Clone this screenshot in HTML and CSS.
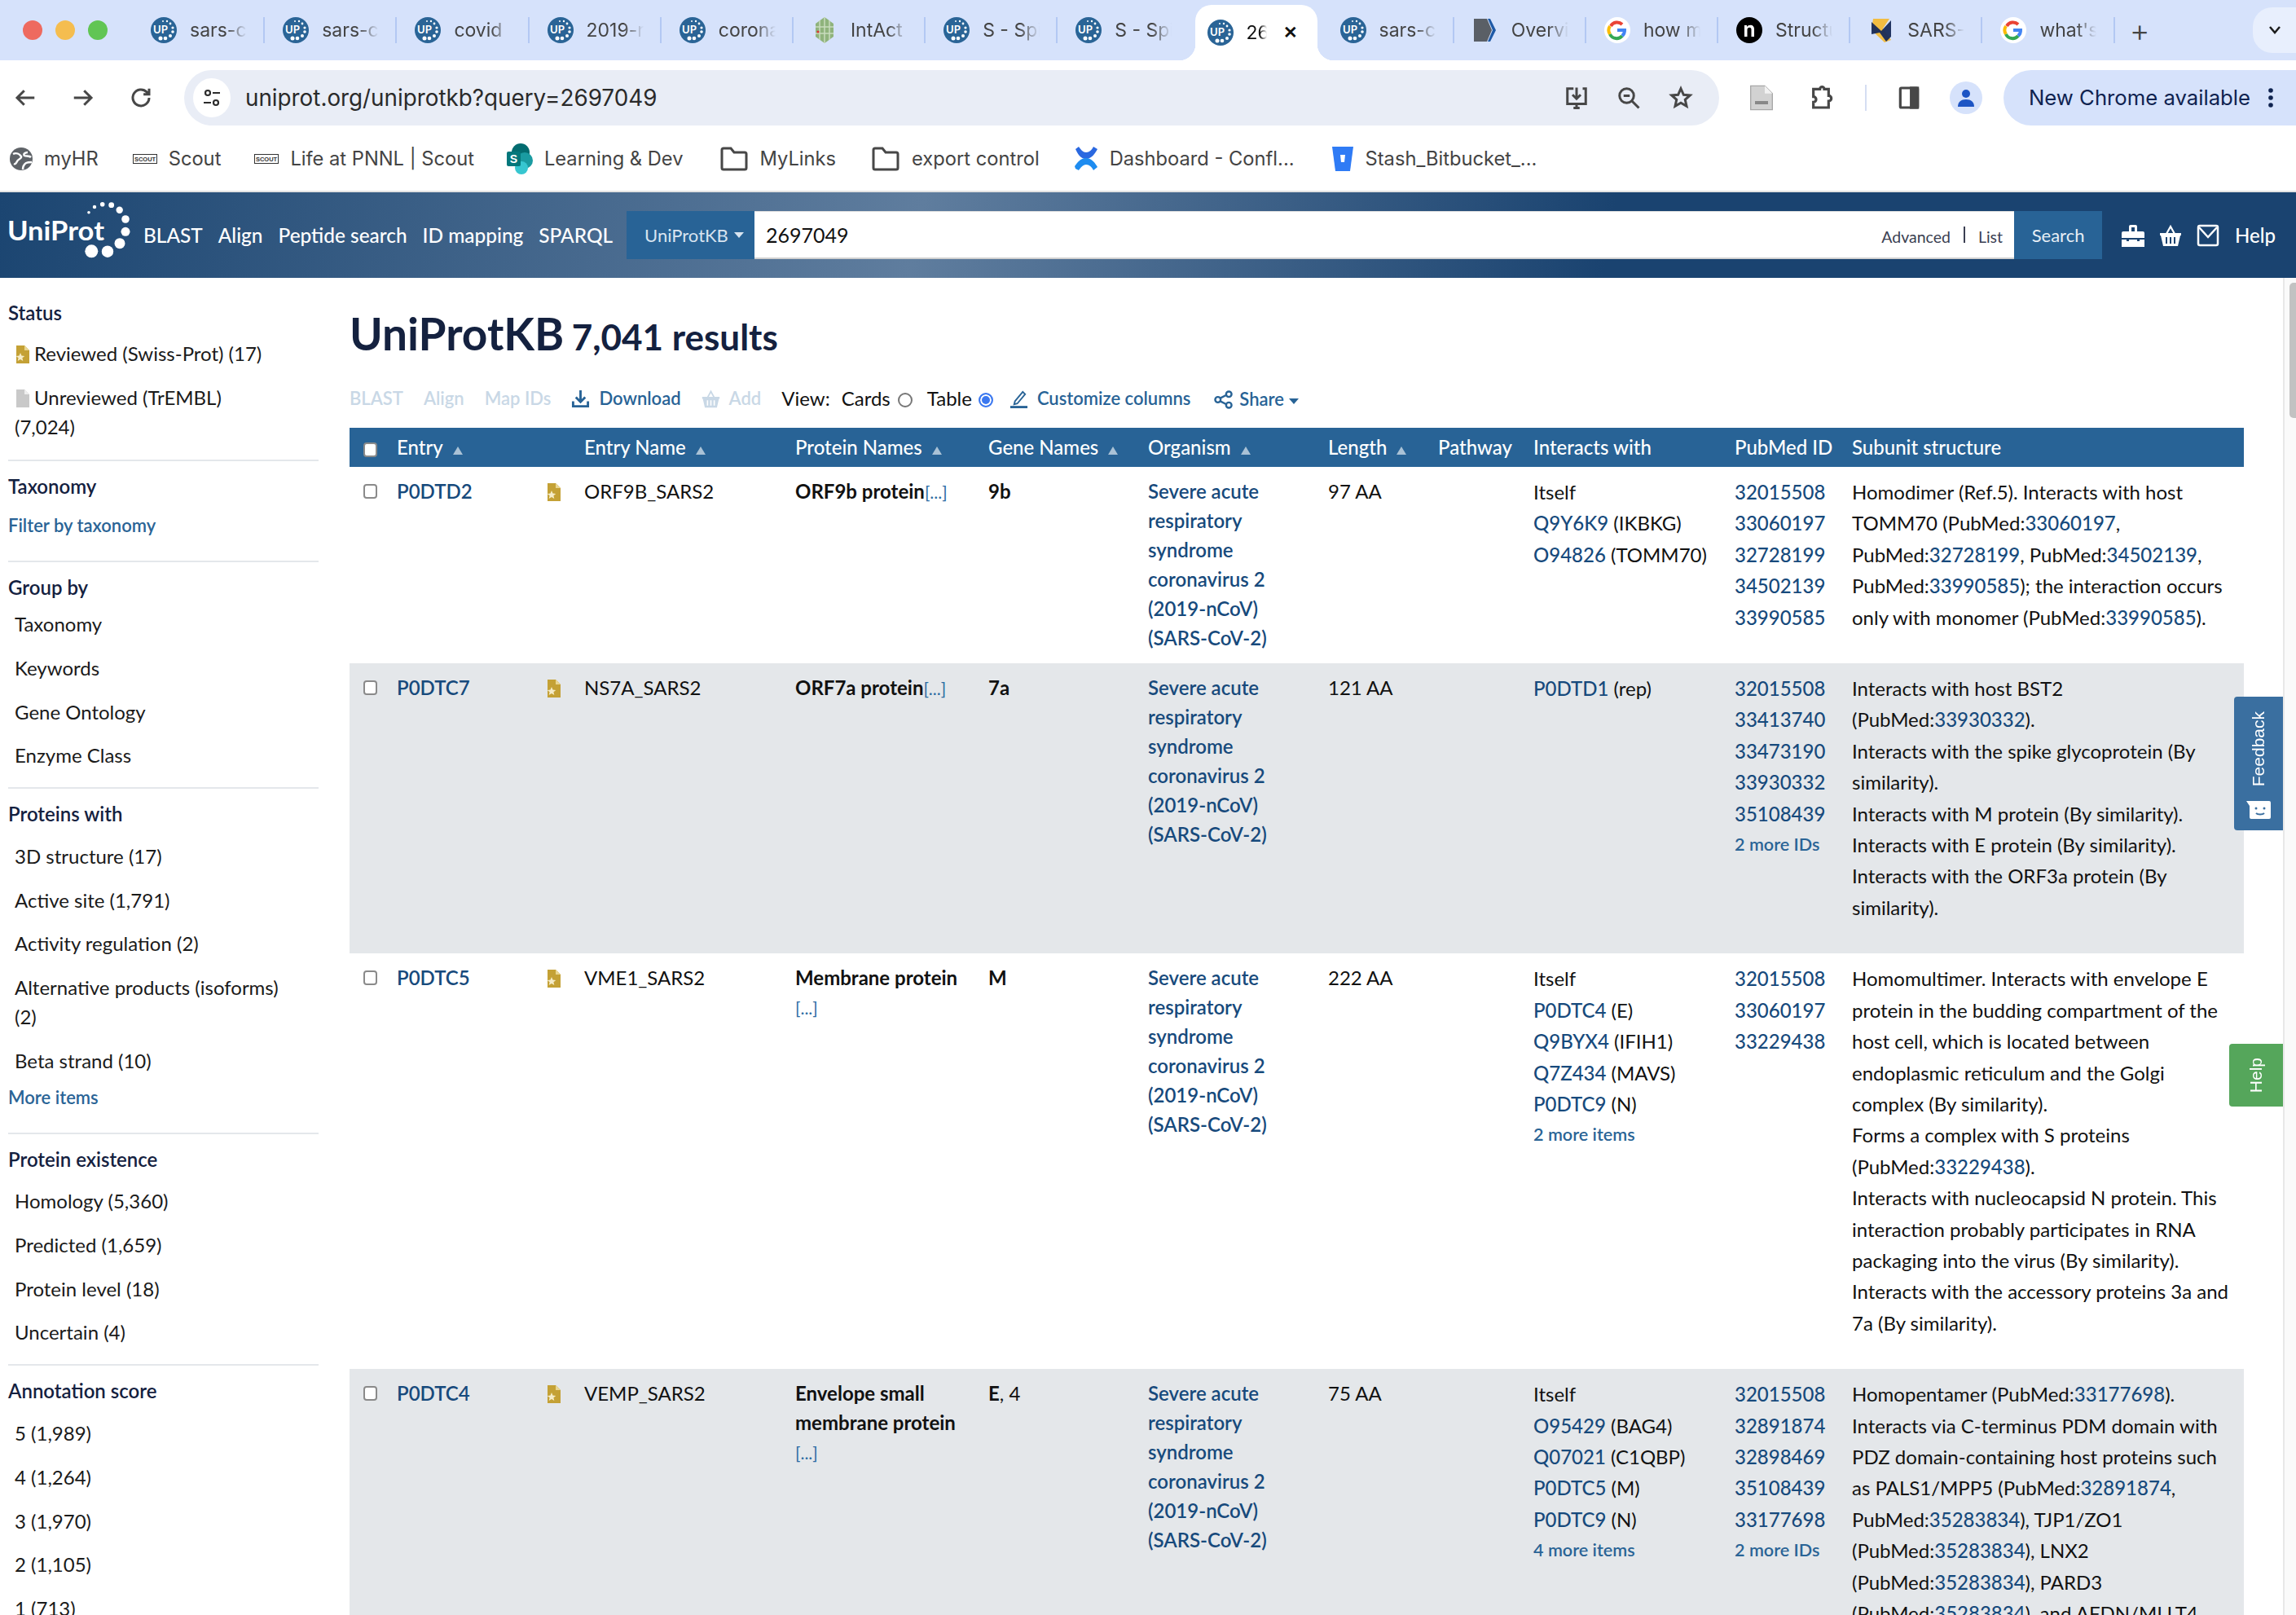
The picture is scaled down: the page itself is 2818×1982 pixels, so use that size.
FILE: index.html
```html
<!DOCTYPE html>
<html lang="en">
<head>
    <meta charset="UTF-8">
    <title>2697049 | UniProtKB</title>
    <link rel="stylesheet" href="styles.css">
</head>
<body>
    <svg class="defs" aria-hidden="true">
        <symbol id="i-up" viewBox="0 0 32 32">
            <circle cx="16" cy="16" r="16" fill="#2a6496"/>
            <text x="3" y="20" font-family="Lato, sans-serif" font-weight="700" font-size="13" fill="#fff">UP</text>
            <circle cx="15" cy="5" r="1" fill="#fff"/><circle cx="20" cy="5" r="1.2" fill="#fff"/><circle cx="24" cy="8" r="1.4" fill="#fff"/>
            <circle cx="27" cy="13" r="1.6" fill="#fff"/><circle cx="27" cy="18" r="1.8" fill="#fff"/><circle cx="24" cy="23" r="2" fill="#fff"/>
            <circle cx="18" cy="26" r="2.3" fill="#fff"/><circle cx="12" cy="26" r="2.5" fill="#fff"/>
        </symbol>
        <symbol id="i-g" viewBox="0 0 32 32">
            <circle cx="16" cy="16" r="16" fill="#fff"/>
            <path d="M8 11a9 9 0 0 1 14-2" fill="none" stroke="#ea4335" stroke-width="4"/>
            <path d="M7 21a9 9 0 0 1 0-10" fill="none" stroke="#fbbc05" stroke-width="4"/>
            <path d="M22 23a9 9 0 0 1-15-2" fill="none" stroke="#34a853" stroke-width="4"/>
            <path d="M16 16h9a9 9 0 0 1-3 7" fill="none" stroke="#4285f4" stroke-width="4"/>
        </symbol>
        <symbol id="i-folder" viewBox="0 0 34 34">
            <path d="M2 6a2 2 0 0 1 2-2h9l4 5h13a2 2 0 0 1 2 2v17a2 2 0 0 1-2 2H4a2 2 0 0 1-2-2z" fill="none" stroke="#474747" stroke-width="3"/>
        </symbol>
        <symbol id="i-scout" viewBox="0 0 30 12">
            <rect x=".5" y=".5" width="29" height="11" fill="#fff" stroke="#333"/>
            <text x="15" y="9" text-anchor="middle" font-family="Liberation Sans, sans-serif" font-weight="700" font-size="7.5" fill="#333">SCOUT</text>
        </symbol>
        <symbol id="i-gold" viewBox="0 0 16 22">
            <path d="M0 0h10l6 6v16H0z" fill="#c4a135"/>
            <path d="M10 0l6 6h-6z" fill="#e9d691"/>
            <path d="M5 9l1.500 3.600 3.800.3-2.900 2.400.9 3.700L5 17l-3.300 2 .9-3.700L-.3 12.900l3.800-.3z" fill="#f5ecc8"/>
        </symbol>
        <symbol id="i-grey" viewBox="0 0 16 22">
            <path d="M0 0h10l6 6v16H0z" fill="#c9c9c9"/>
            <path d="M10 0l6 6h-6z" fill="#eee"/>
        </symbol>
        <symbol id="i-basket" viewBox="0 0 28 28">
            <path d="M9 12l5-9 5 9" fill="none" stroke="currentColor" stroke-width="2.200"/>
            <path d="M1 11h26v3h-1l-3 13H5L2 14H1z" fill="currentColor"/>
            <path d="M9 16v8M14 16v8M19 16v8" stroke="#fff" stroke-width="2"/>
        </symbol>
        <symbol id="i-download" viewBox="0 0 24 24">
            <path d="M12 1v15M6 10l6 6 6-6" fill="none" stroke="currentColor" stroke-width="3"/>
            <path d="M1 15h3v5h16v-5h3v8H1z" fill="currentColor"/>
        </symbol>
    </svg>

    <div class="tabstrip">
        <div class="lights"><i class="light red"></i><i class="light yellow"></i><i class="light green"></i></div>
        <div class="tab"><svg class="fav"><use href="#i-up"/></svg><span class="tab-title">sars-cov</span></div>
        <div class="tab"><svg class="fav"><use href="#i-up"/></svg><span class="tab-title">sars-cov</span></div>
        <div class="tab"><svg class="fav"><use href="#i-up"/></svg><span class="tab-title">covid</span></div>
        <div class="tab"><svg class="fav"><use href="#i-up"/></svg><span class="tab-title">2019-nCoV</span></div>
        <div class="tab"><svg class="fav"><use href="#i-up"/></svg><span class="tab-title">coronavirus</span></div>
        <div class="tab">
            <svg class="fav" viewBox="0 0 32 32"><path d="M16 0l11 8v16l-11 8-11-8V8z" fill="#8fb37c"/><path d="M5 12h22M5 20h22M16 0v32M10 4v24M22 4v24" stroke="#c9dcbd" stroke-width="1.500"/><circle cx="8" cy="18" r="1.500" fill="#d33"/></svg>
            <span class="tab-title">IntAct</span>
        </div>
        <div class="tab"><svg class="fav"><use href="#i-up"/></svg><span class="tab-title">S - Spike</span></div>
        <div class="tab tab-last-up"><svg class="fav"><use href="#i-up"/></svg><span class="tab-title">S - Spike</span></div>
        <div class="tab tab-active"><svg class="fav"><use href="#i-up"/></svg><span class="tab-title short">2697049</span><span class="tab-close">✕</span></div>
        <div class="tab"><svg class="fav"><use href="#i-up"/></svg><span class="tab-title">sars-cov</span></div>
        <div class="tab">
            <svg class="fav" viewBox="0 0 32 32"><path d="M2 2h16l6 14-6 14H2z" fill="#5a5f66"/><path d="M22 2l7 14-7 14h-3l6-14-6-14z" fill="#1f5aa6"/></svg>
            <span class="tab-title">Overview</span>
        </div>
        <div class="tab"><svg class="fav"><use href="#i-g"/></svg><span class="tab-title">how many</span></div>
        <div class="tab">
            <svg class="fav" viewBox="0 0 32 32"><circle cx="16" cy="16" r="16" fill="#000"/><path d="M10 24V10h3v2c1-1.500 2.500-2.300 4.500-2.300 3 0 4.500 2 4.500 5V24h-3.500v-8.500c0-1.800-.8-2.800-2.300-2.800s-2.700 1-2.700 2.800V24z" fill="#fff"/></svg>
            <span class="tab-title">Structure</span>
        </div>
        <div class="tab">
            <svg class="fav" viewBox="0 0 32 32"><path d="M6 2h20L18 14l10 14-8 3L4 16z" fill="#f2bd42"/><path d="M4 6l12 11 12-13v20l-6 6-8-11-10 2z" fill="#172a58" opacity=".95"/></svg>
            <span class="tab-title">SARS-CoV</span>
        </div>
        <div class="tab"><svg class="fav"><use href="#i-g"/></svg><span class="tab-title">what's the</span></div>
        <span class="tab-new">+</span>
        <span class="tab-list"><svg width="16" height="12" viewBox="0 0 16 12"><path d="M2 2l6 7 6-7" fill="none" stroke="#1c1c1c" stroke-width="2.500"/></svg></span>
    </div>

    <div class="toolbar">
        <svg class="tool nav-back" viewBox="0 0 24 24"><path d="M21 12H4M11 5l-7 7 7 7" /></svg>
        <svg class="tool nav-fwd" viewBox="0 0 24 24"><path d="M3 12h17M13 5l7 7-7 7" /></svg>
        <svg class="tool nav-reload" viewBox="0 0 24 24"><path d="M20 12a8 8 0 1 1-2.300-5.700L20 8.500M20 3v5.500h-5.500" /></svg>
        <div class="omnibox">
            <span class="site-info"><svg width="24" height="24" viewBox="0 0 24 24" fill="none" stroke="#2c2c2c" stroke-width="2.200"><circle cx="7" cy="6" r="3"/><path d="M13 6h9M2 18h9"/><circle cx="17" cy="18" r="3"/></svg></span>
            <span class="url">uniprot.org/uniprotkb?query=2697049</span>
            <svg class="tool omni-icon omni-first" viewBox="0 0 24 24"><path d="M9 3H3v15h18V3h-3M12 2v10M8 9l4 4 4-4M9 22h6M12 18v4" /></svg>
            <svg class="tool omni-icon" viewBox="0 0 24 24"><circle cx="10" cy="10" r="7"/><path d="M15 15l7 7M7 10h6"/></svg>
            <svg class="tool omni-icon" viewBox="0 0 24 24"><path d="M12 3l2.700 6 6.300.6-4.800 4.200 1.400 6.400L12 17l-5.600 3.200 1.400-6.400L3 9.600 9.300 9z" /></svg>
        </div>
        <svg class="ext-icon" viewBox="0 0 24 24"><path d="M2 1h13l7 7v15H2z" fill="#d2d2d2" stroke="#a8a8a8"/><path d="M15 1v7h7z" fill="#f2f2f2"/><rect x="6" y="15" width="12" height="3" fill="#888"/></svg>
        <svg class="tool ext-icon puzzle" viewBox="0 0 24 24"><path d="M9 4h2a2 2 0 0 1 4 0h4v6a2.500 2.500 0 0 1 0 5v6H5v-5a2.500 2.500 0 0 0 0-5V4z" /></svg>
        <span class="tool-sep"></span>
        <svg class="tool ext-icon" viewBox="0 0 24 24"><rect x="4" y="3" width="16" height="18" rx="1"/><rect x="14" y="3" width="6" height="18" fill="#474747"/></svg>
        <span class="avatar"><svg width="26" height="26" viewBox="0 0 26 26"><circle cx="13" cy="8" r="5" fill="#1d55c4"/><path d="M3 24c0-6 4-9 10-9s10 3 10 9z" fill="#1d55c4"/></svg></span>
        <div class="update-pill">
            <span>New Chrome available</span>
            <svg width="6" height="24" viewBox="0 0 6 24"><circle cx="3" cy="3" r="2.800" fill="#0f2350"/><circle cx="3" cy="12" r="2.800" fill="#0f2350"/><circle cx="3" cy="21" r="2.800" fill="#0f2350"/></svg>
        </div>
    </div>

    <div class="bookmarks">
        <span class="bm"><svg class="bm-globe" viewBox="0 0 28 28"><circle cx="14" cy="14" r="14" fill="#5f6368"/><path d="M4 8c4-2 8 0 10 3 1 3-4 3-5 6-1 2-2 4-4 3M22 6c-3 0-6 2-4 4 2 1 6 0 8 2M16 27c0-3 1-6 4-8 2-1 5-1 7-1" fill="none" stroke="#fff" stroke-width="2.500"/></svg>myHR</span>
        <span class="bm bm-scout"><svg class="bm-s"><use href="#i-scout"/></svg>Scout</span>
        <span class="bm bm-scout2"><svg class="bm-s"><use href="#i-scout"/></svg>Life at PNNL | Scout</span>
        <span class="bm bm-sp"><svg class="bm-share" viewBox="0 0 34 38"><circle cx="17" cy="11" r="11" fill="#036c70"/><circle cx="22" cy="21" r="10" fill="#1a9ba1"/><circle cx="18" cy="30" r="8" fill="#37c6d0"/><rect x="0" y="10" width="17" height="18" rx="2" fill="#04777b"/><text x="8.500" y="24" text-anchor="middle" font-family="Liberation Sans, sans-serif" font-weight="700" font-size="14" fill="#fff">S</text></svg>Learning &amp; Dev</span>
        <span class="bm bm-f1"><svg class="bm-folder"><use href="#i-folder"/></svg>MyLinks</span>
        <span class="bm bm-f2"><svg class="bm-folder"><use href="#i-folder"/></svg>export control</span>
        <span class="bm bm-conf"><svg class="bm-c" viewBox="0 0 30 32"><path d="M2 4l4-3c3 4 5 7 9 7s7-3 9-7l5 3c-3 5-7 12-14 12S5 10 2 4z" fill="#2a68e0"/><path d="M2 28l-1-3c3-4 7-10 14-10s11 6 14 11l-5 4c-2-4-5-7-9-7s-7 4-9 7z" fill="#1e8cf0"/></svg>Dashboard - Confl...</span>
        <span class="bm bm-bit"><svg class="bm-b" viewBox="0 0 26 32"><path d="M0 1h26l-4 30H4z" fill="#2f7bf5"/><path d="M10 11h6l-1 9h-4z" fill="#fff"/></svg>Stash_Bitbucket_...</span>
    </div>

    <header class="site-head">
        <svg class="logo" viewBox="0 0 150 90">
            <text x="-1" y="54" font-family="Lato, sans-serif" font-weight="700" font-size="32" textLength="119" lengthAdjust="spacingAndGlyphs" fill="#fff">UniProt</text>
            <circle cx="99" cy="19.700" r="1.800" fill="#fff"/><circle cx="106" cy="13" r="2.200" fill="#fff"/><circle cx="115.700" cy="9.700" r="2.800" fill="#fff"/>
            <circle cx="126.700" cy="10.700" r="3.400" fill="#fff"/><circle cx="136.700" cy="16.700" r="4.200" fill="#fff"/><circle cx="144" cy="28" r="4.800" fill="#fff"/>
            <circle cx="144" cy="43.300" r="5.500" fill="#fff"/><circle cx="137" cy="57.700" r="6.500" fill="#fff"/><circle cx="122" cy="67.700" r="7.200" fill="#fff"/>
            <circle cx="102.300" cy="67.300" r="8" fill="#fff"/>
        </svg>
        <nav class="site-nav">
            <a>BLAST</a><a>Align</a><a>Peptide search</a><a>ID mapping</a><a>SPARQL</a>
        </nav>
        <div class="search">
            <span class="search-ns">UniProtKB<i class="caret"></i></span>
            <div class="search-box">
                <span class="search-term">2697049</span>
                <span class="search-opt">Advanced</span><span class="search-bar"></span><span class="search-opt">List</span>
            </div>
            <span class="search-btn">Search</span>
        </div>
        <div class="head-icons">
            <svg viewBox="0 0 28 28"><path d="M9 9V3a2 2 0 0 1 2-2h6a2 2 0 0 1 2 2v6h7a2 2 0 0 1 2 2v6H0v-6a2 2 0 0 1 2-2zM12 4v5h4V4z" fill="#fff" fill-rule="evenodd"/><path d="M0 19h6v2h3v-2h10v2h3v-2h6v9H0z" fill="#fff"/></svg>
            <svg viewBox="0 0 28 28" class="basket"><path d="M9 12l5-9 5 9" fill="none" stroke="#fff" stroke-width="2.200"/><path d="M1 11h26v3h-1l-3 13H5L2 14H1z" fill="#fff"/><path d="M9 16v8M14 16v8M19 16v8" stroke="#1a4370" stroke-width="2"/></svg>
            <svg viewBox="0 0 28 28"><rect x="2" y="2" width="24" height="24" rx="2" fill="none" stroke="#fff" stroke-width="2.500"/><path d="M3 4l11 12L25 4" fill="none" stroke="#fff" stroke-width="2.500"/></svg>
            <span class="head-help">Help</span>
        </div>
    </header>

    <div class="page">
        <aside class="facets">
            <section class="facet">
                <h4>Status</h4>
                <ul>
                    <li><svg class="doc"><use href="#i-gold"/></svg>Reviewed (Swiss-Prot) (17)</li>
                    <li><svg class="doc"><use href="#i-grey"/></svg>Unreviewed (TrEMBL) (7,024)</li>
                </ul>
            </section>
            <section class="facet facet-link">
                <h4>Taxonomy</h4>
                <a class="more">Filter by taxonomy</a>
            </section>
            <section class="facet">
                <h4 class="tight">Group by</h4>
                <ul>
                    <li>Taxonomy</li>
                    <li>Keywords</li>
                    <li>Gene Ontology</li>
                    <li>Enzyme Class</li>
                </ul>
            </section>
            <section class="facet">
                <h4>Proteins with</h4>
                <ul>
                    <li>3D structure (17)</li>
                    <li>Active site (1,791)</li>
                    <li>Activity regulation (2)</li>
                    <li>Alternative products (isoforms) (2)</li>
                    <li>Beta strand (10)</li>
                </ul>
                <a class="more more-items">More items</a>
            </section>
            <section class="facet">
                <h4>Protein existence</h4>
                <ul>
                    <li>Homology (5,360)</li>
                    <li>Predicted (1,659)</li>
                    <li>Protein level (18)</li>
                    <li>Uncertain (4)</li>
                </ul>
            </section>
            <section class="facet">
                <h4>Annotation score</h4>
                <ul>
                    <li>5 (1,989)</li>
                    <li>4 (1,264)</li>
                    <li>3 (1,970)</li>
                    <li>2 (1,105)</li>
                    <li>1 (713)</li>
                </ul>
            </section>
        </aside>

        <main class="results">
            <h1>UniProtKB <small>7,041 results</small></h1>
            <div class="actions">
                <a class="act off">BLAST</a>
                <a class="act off">Align</a>
                <a class="act off">Map IDs</a>
                <a class="act act-dl"><svg class="act-icon"><use href="#i-download"/></svg>Download</a>
                <a class="act off"><svg class="act-icon"><use href="#i-basket"/></svg>Add</a>
                <span class="view">View:</span>
                <label class="view-opt">Cards<i class="radio"></i></label>
                <label class="view-opt">Table<i class="radio on"></i></label>
                <a class="act act-cust"><svg class="act-icon" viewBox="0 0 24 24"><path d="M7 15L17 3l3 3-10 12-4 1z" fill="none" stroke="currentColor" stroke-width="2"/><path d="M1 21h22v3H1z" fill="currentColor"/></svg>Customize columns</a>
                <a class="act act-share"><svg class="act-icon" viewBox="0 0 24 24"><circle cx="5" cy="12" r="3.500" fill="none" stroke="currentColor" stroke-width="2.500"/><circle cx="19" cy="5" r="3.500" fill="none" stroke="currentColor" stroke-width="2.500"/><circle cx="19" cy="19" r="3.500" fill="none" stroke="currentColor" stroke-width="2.500"/><path d="M8 10l8-4M8 14l8 4" stroke="currentColor" stroke-width="2.500"/></svg>Share<i class="caret"></i></a>
            </div>

            <table class="grid">
                <colgroup>
                    <col class="c-check"><col class="c-entry"><col class="c-rev"><col class="c-name"><col class="c-prot"><col class="c-gene">
                    <col class="c-org"><col class="c-len"><col class="c-path"><col class="c-int"><col class="c-pub"><col class="c-sub">
                </colgroup>
                <thead>
                    <tr>
                        <th class="cell-check"><input type="checkbox" class="check"></th>
                        <th colspan="2">Entry<i class="sort"></i></th>
                        <th>Entry Name<i class="sort"></i></th>
                        <th>Protein Names<i class="sort"></i></th>
                        <th>Gene Names<i class="sort"></i></th>
                        <th>Organism<i class="sort"></i></th>
                        <th>Length<i class="sort"></i></th>
                        <th>Pathway</th>
                        <th>Interacts with</th>
                        <th>PubMed ID</th>
                        <th>Subunit structure</th>
                    </tr>
                </thead>
                <tbody>
                    <tr>
                        <td class="cell-check"><input type="checkbox" class="check"></td>
                        <td><a class="acc">P0DTD2</a></td>
                        <td><svg class="doc"><use href="#i-gold"/></svg></td>
                        <td>ORF9B_SARS2</td>
                        <td><b>ORF9b protein</b><a class="dots">[...]</a></td>
                        <td><b>9b</b></td>
                        <td><a class="org">Severe acute respiratory syndrome coronavirus 2 (2019-nCoV) (SARS-CoV-2)</a></td>
                        <td>97 AA</td>
                        <td></td>
                        <td class="tall"><div>Itself</div><div><a>Q9Y6K9</a> (IKBKG)</div><div><a>O94826</a> (TOMM70)</div></td>
                        <td class="tall"><div><a>32015508</a></div><div><a>33060197</a></div><div><a>32728199</a></div><div><a>34502139</a></div><div><a>33990585</a></div></td>
                        <td class="tall sub">Homodimer (Ref.5). Interacts with host TOMM70 (PubMed:<a>33060197</a>, PubMed:<a>32728199</a>, PubMed:<a>34502139</a>, PubMed:<a>33990585</a>); the interaction occurs only with monomer (PubMed:<a>33990585</a>).</td>
                    </tr>
                    <tr>
                        <td class="cell-check"><input type="checkbox" class="check"></td>
                        <td><a class="acc">P0DTC7</a></td>
                        <td><svg class="doc"><use href="#i-gold"/></svg></td>
                        <td>NS7A_SARS2</td>
                        <td><b>ORF7a protein</b><a class="dots">[...]</a></td>
                        <td><b>7a</b></td>
                        <td><a class="org">Severe acute respiratory syndrome coronavirus 2 (2019-nCoV) (SARS-CoV-2)</a></td>
                        <td>121 AA</td>
                        <td></td>
                        <td class="tall"><div><a>P0DTD1</a> (rep)</div></td>
                        <td class="tall"><div><a>32015508</a></div><div><a>33413740</a></div><div><a>33473190</a></div><div><a>33930332</a></div><div><a>35108439</a></div><a class="more">2 more IDs</a></td>
                        <td class="tall sub">
                            <div>Interacts with host BST2 (PubMed:<a>33930332</a>).</div>
                            <div>Interacts with the spike glycoprotein (By similarity).</div>
                            <div>Interacts with M protein (By similarity).</div>
                            <div>Interacts with E protein (By similarity).</div>
                            <div>Interacts with the ORF3a protein (By similarity).</div>
                        </td>
                    </tr>
                    <tr>
                        <td class="cell-check"><input type="checkbox" class="check"></td>
                        <td><a class="acc">P0DTC5</a></td>
                        <td><svg class="doc"><use href="#i-gold"/></svg></td>
                        <td>VME1_SARS2</td>
                        <td><b>Membrane protein</b> <a class="dots">[...]</a></td>
                        <td><b>M</b></td>
                        <td><a class="org">Severe acute respiratory syndrome coronavirus 2 (2019-nCoV) (SARS-CoV-2)</a></td>
                        <td>222 AA</td>
                        <td></td>
                        <td class="tall"><div>Itself</div><div><a>P0DTC4</a> (E)</div><div><a>Q9BYX4</a> (IFIH1)</div><div><a>Q7Z434</a> (MAVS)</div><div><a>P0DTC9</a> (N)</div><a class="more">2 more items</a></td>
                        <td class="tall"><div><a>32015508</a></div><div><a>33060197</a></div><div><a>33229438</a></div></td>
                        <td class="tall sub">
                            <div>Homomultimer. Interacts with envelope E protein in the budding compartment of the host cell, which is located between endoplasmic reticulum and the Golgi complex (By similarity).</div>
                            <div>Forms a complex with S proteins (PubMed:<a>33229438</a>).</div>
                            <div>Interacts with nucleocapsid N protein. This interaction probably participates in RNA packaging into the virus (By similarity).</div>
                            <div>Interacts with the accessory proteins 3a and 7a (By similarity).</div>
                        </td>
                    </tr>
                    <tr>
                        <td class="cell-check"><input type="checkbox" class="check"></td>
                        <td><a class="acc">P0DTC4</a></td>
                        <td><svg class="doc"><use href="#i-gold"/></svg></td>
                        <td>VEMP_SARS2</td>
                        <td><b>Envelope small membrane protein</b> <a class="dots">[...]</a></td>
                        <td><b>E</b>, 4</td>
                        <td><a class="org">Severe acute respiratory syndrome coronavirus 2 (2019-nCoV) (SARS-CoV-2)</a></td>
                        <td>75 AA</td>
                        <td></td>
                        <td class="tall"><div>Itself</div><div><a>O95429</a> (BAG4)</div><div><a>Q07021</a> (C1QBP)</div><div><a>P0DTC5</a> (M)</div><div><a>P0DTC9</a> (N)</div><a class="more">4 more items</a></td>
                        <td class="tall"><div><a>32015508</a></div><div><a>32891874</a></div><div><a>32898469</a></div><div><a>35108439</a></div><div><a>33177698</a></div><a class="more">2 more IDs</a></td>
                        <td class="tall sub">Homopentamer (PubMed:<a>33177698</a>). Interacts via C-terminus PDM domain with PDZ domain-containing host proteins such as PALS1/MPP5 (PubMed:<a>32891874</a>, PubMed:<a>35283834</a>), TJP1/ZO1 (PubMed:<a>35283834</a>), LNX2 (PubMed:<a>35283834</a>), PARD3 (PubMed:<a>35283834</a>), and AFDN/MLLT4 (PubMed:<a>35283834</a>).</td>
                    </tr>
                </tbody>
            </table>
        </main>

        <div class="scrollbar"><span class="scroll-thumb"></span></div>

        <a class="side-btn side-feedback">
            <span>Feedback</span>
            <svg width="30" height="22" viewBox="0 0 30 22"><path d="M0 0h28a2 2 0 0 1 2 2v18a2 2 0 0 1-2 2H6a2 2 0 0 1-2-2V6z" fill="#fff"/><circle cx="12" cy="9" r="1.500" fill="#3a6fa0"/><circle cx="22" cy="9" r="1.500" fill="#3a6fa0"/><path d="M12 15c2 2 8 2 10 0" fill="none" stroke="#3a6fa0" stroke-width="2"/></svg>
        </a>
        <a class="side-btn side-help"><span>Help</span></a>
    </div>
</body>
</html>
```

FILE: styles.css
```css
* {
    box-sizing: border-box;
}
html, body {
    height: 1982px;
    overflow: hidden;
}
body {
    margin: 0;
    font-family: Lato, "Liberation Sans", sans-serif;
    font-size: 24px;
    line-height: 36px;
    color: #111;
    background-color: #fff;
}
.defs {
    position: absolute;
    width: 0;
    height: 0;
}
a {
    color: inherit;
    text-decoration: none;
}
ul {
    list-style: none;
    margin: 0;
    padding: 0;
}

/* browser tabs */
.tabstrip {
    display: flex;
    align-items: center;
    height: 74px;
    background-color: #d6e2fb;
    font-family: Inter, "Noto Sans", sans-serif;
    font-size: 23px;
    color: #444;
}
.lights {
    display: flex;
    gap: 16px;
    width: 163px;
    padding-left: 28px;
}
.light {
    width: 24px;
    height: 24px;
    border-radius: 50%;
}
.red { background-color: #ee6a5f; }
.yellow { background-color: #f5bd4f; }
.green { background-color: #61c554; }
.tab {
    display: flex;
    align-items: center;
    width: 162.2px;
    height: 32px;
    padding-left: 22px;
    border-right: 2px solid #b3c8f3;
}
.fav {
    width: 32px;
    height: 32px;
    flex: none;
    margin-right: 16px;
}
.tab-title {
    width: 70px;
    overflow: hidden;
    white-space: nowrap;
    -webkit-mask-image: linear-gradient(to right, #000 65%, transparent);
    mask-image: linear-gradient(to right, #000 65%, transparent);
}
.tab-title.short {
    width: 25px;
    margin-right: 20px;
}
.tab-last-up {
    border-right: 0;
}
.tab-active {
    position: relative;
    align-self: flex-end;
    height: 68px;
    margin: 0 6px;
    padding-left: 15px;
    width: 150px;
    border-right: 0;
    background-color: #fff;
    border-radius: 20px 20px 0 0;
    color: #111;
}
.tab-active::before,
.tab-active::after {
    content: "";
    position: absolute;
    bottom: 0;
    width: 20px;
    height: 20px;
}
.tab-active::before {
    left: -20px;
    background: radial-gradient(circle at 0 0, #d6e2fb 20px, #fff 20.5px);
}
.tab-active::after {
    right: -20px;
    background: radial-gradient(circle at 100% 0, #d6e2fb 20px, #fff 20.5px);
}
.tab-close {
    font-size: 21px;
    font-weight: 700;
    color: #111;
}
.tab-new {
    margin-left: 18px;
    font-size: 38px;
    font-weight: 300;
    color: #444;
}
.tab-list {
    display: flex;
    align-items: center;
    justify-content: center;
    width: 53px;
    height: 56px;
    margin-left: auto;
    margin-bottom: 6px;
    margin-top: 6px;
    background-color: #e8effd;
    border-radius: 24px 0 0 24px;
}

/* address bar */
.toolbar {
    display: flex;
    align-items: center;
    height: 92px;
    padding: 12px 0 12px 16px;
}
.tool {
    width: 30px;
    height: 30px;
    flex: none;
    fill: none;
    stroke: #474747;
    stroke-width: 2.4;
}
.nav-fwd { margin-left: 41px; }
.nav-reload { margin-left: 41px; }
.omnibox {
    display: flex;
    align-items: center;
    width: 1884px;
    height: 68px;
    margin-left: 38px;
    padding: 0 32px 0 11px;
    background-color: #e9edf6;
    border-radius: 34px;
}
.site-info {
    display: flex;
    align-items: center;
    justify-content: center;
    width: 46px;
    height: 48px;
    background-color: #fff;
    border-radius: 50%;
}
.url {
    margin-left: 18px;
    font-family: Inter, "Noto Sans", sans-serif;
    font-size: 27.8px;
    color: #2a2a2a;
}
.omni-icon {
    margin-right: 34px;
}
.omni-first {
    margin-left: auto;
}
.omni-icon:last-child {
    margin-right: 0;
}
.ext-icon {
    width: 32px;
    height: 32px;
    flex: none;
    margin-left: 36px;
}
.puzzle {
    margin-left: 41px;
}
.tool-sep {
    width: 2px;
    height: 32px;
    margin-left: 38px;
    background-color: #d5def2;
}
.avatar {
    display: flex;
    align-items: center;
    justify-content: center;
    width: 40px;
    height: 40px;
    margin-left: 34px;
    border-radius: 50%;
    background-color: #d6e2fb;
}
.update-pill {
    display: flex;
    align-items: center;
    justify-content: space-between;
    flex: 1;
    height: 68px;
    margin-left: 26px;
    padding: 0 28px 0 31px;
    background-color: #d6e2fb;
    border-radius: 34px 0 0 34px;
    font-family: Inter, "Noto Sans", sans-serif;
    font-size: 25.7px;
    color: #0f2350;
}

/* bookmarks */
.bookmarks {
    display: flex;
    align-items: center;
    height: 70px;
    padding-bottom: 10px;
    border-bottom: 2px solid #e2e2e2;
    font-family: Inter, "Noto Sans", sans-serif;
    font-size: 23.7px;
    color: #444;
    white-space: nowrap;
}
.bm {
    display: flex;
    align-items: center;
    flex: none;
}
.bm:first-child { margin-left: 12px; }
.bm-globe { width: 28px; height: 28px; margin-right: 14px; }
.bm-s { width: 30px; height: 12px; margin-right: 14px; }
.bm-share { width: 34px; height: 38px; margin-right: 12px; }
.bm-folder { width: 34px; height: 34px; margin-right: 15px; }
.bm-c { width: 30px; height: 32px; margin-right: 14px; }
.bm-b { width: 26px; height: 32px; margin-right: 15px; }
.bm-scout { margin-left: 42px; }
.bm-scout2 { margin-left: 41px; }
.bm-sp { margin-left: 40px; }
.bm-f1 { margin-left: 45px; }
.bm-f2 { margin-left: 44px; }
.bm-conf { margin-left: 42px; }
.bm-bit { margin-left: 46px; }

/* uniprot header */
.site-head {
    display: flex;
    align-items: center;
    height: 105px;
    padding-left: 10px;
    background: linear-gradient(100deg, #1b4571 0, #5f7d9e 40%, #1a4370 70%, #1a4370 100%);
    color: #fff;
    font-weight: 500;
}
.logo {
    width: 150px;
    height: 90px;
    flex: none;
    margin-top: -5px;
}
.site-nav {
    display: flex;
    gap: 19px;
    margin-left: 16px;
    font-size: 24.4px;
    white-space: nowrap;
}
.search {
    display: flex;
    width: 1811px;
    height: 59px;
    margin-left: 17px;
    font-weight: 400;
}
.search-ns {
    display: flex;
    align-items: center;
    width: 157px;
    padding-left: 22px;
    background-color: #286396;
    font-size: 22px;
    color: #d8e4f0;
}
.caret {
    display: inline-block;
    width: 0;
    height: 0;
    margin-left: 7px;
    border-left: 6px solid transparent;
    border-right: 6px solid transparent;
    border-top: 7px solid currentColor;
}
.search-box {
    display: flex;
    align-items: center;
    flex: 1;
    padding: 0 14px;
    background-color: #fff;
    border-top: 1px solid #e0e0e0;
    border-bottom: 2px solid #d0d0d0;
    color: #111;
}
.search-term {
    margin-right: auto;
    font-size: 25px;
}
.search-opt {
    padding-top: 6px;
    font-size: 19.5px;
    color: #3b3f52;
}
.search-bar {
    width: 2px;
    height: 20px;
    margin: 0 16px;
    background-color: #3b3f52;
}
.search-btn {
    display: flex;
    align-items: center;
    justify-content: center;
    width: 108px;
    background-color: #286396;
    font-size: 22px;
    color: #e6eef5;
}
.head-icons {
    display: flex;
    align-items: center;
    gap: 18px;
    margin-left: 24px;
}
.head-icons svg {
    width: 28px;
    height: 28px;
}
.head-help {
    margin-left: 1px;
}

/* page body */
.page {
    position: relative;
    display: flex;
    height: 1641px;
    overflow: hidden;
}
.facets {
    flex: none;
    width: 381px;
    margin-left: 10px;
    padding-top: 25px;
}
.facet {
    padding-bottom: 12px;
    border-bottom: 2px solid #e4e7eb;
    margin-bottom: 13px;
}
.facet:first-child {
    padding-bottom: 14px;
}
.facet:first-child h4 {
    margin-bottom: 5px;
}
.facet:last-child {
    border-bottom: 0;
}
.facet h4 {
    margin: 0 0 7px;
    font-size: 24px;
    line-height: 36px;
    font-weight: 600;
    color: #14213f;
}
.facet h4.tight {
    margin-bottom: 0;
}
.facet li {
    padding: 8.85px 42px 8.85px 8px;
    line-height: 36px;
    color: #1a1a1a;
}
.doc {
    width: 16px;
    height: 22px;
    margin: 0 6px 0 2px;
    vertical-align: -3px;
}
.more {
    display: block;
    font-size: 21.6px;
    font-weight: 600;
    line-height: 36px;
    color: #2a6496;
}
.facet-link {
    padding-bottom: 25px;
}
.facet-link .more {
    margin-top: 12px;
    font-size: 22px;
}
.more-items {
    padding-bottom: 13px;
    font-size: 22px;
}
.results {
    flex: none;
    width: 2325px;
    margin-left: 38px;
}
.results h1 {
    margin: 30px 0 0;
    font-size: 55px;
    line-height: 76px;
    font-weight: 700;
    color: #14213f;
}
.results h1 small {
    margin-left: -4px;
    font-size: 44px;
}
.actions {
    display: flex;
    align-items: center;
    height: 40px;
    margin-top: 18px;
    font-size: 22px;
    font-weight: 600;
    color: #286396;
    white-space: nowrap;
}
.act {
    display: flex;
    align-items: center;
    margin-right: 25px;
}
.off {
    color: #c9d8e6;
}
.act-icon {
    width: 23px;
    height: 23px;
    margin-right: 11px;
    flex: none;
}
.view {
    margin-right: 14px;
    font-size: 24px;
    font-weight: 400;
    color: #111;
}
.view-opt {
    display: flex;
    align-items: center;
    margin-right: 18px;
    font-size: 24px;
    font-weight: 400;
    color: #111;
}
.radio {
    width: 18px;
    height: 18px;
    margin-left: 9px;
    margin-top: 4px;
    border: 2px solid #777;
    border-radius: 50%;
    background-color: #fff;
}
.radio.on {
    border-color: #3b78f0;
    background-color: #3b78f0;
    box-shadow: inset 0 0 0 2px #fff;
    margin-left: 8px;
}
.act-cust {
    margin-left: 2px;
    margin-right: 29px;
}
.act-share {
    margin-top: 2px;
}
.act-share .act-icon {
    margin-right: 8px;
}
.act-share .caret {
    margin-left: 6px;
    margin-top: 4px;
}

/* results table */
.grid {
    width: 2325px;
    margin-top: 16px;
    border-collapse: collapse;
    table-layout: fixed;
}
.c-check { width: 43px; }
.c-entry { width: 183px; }
.c-rev { width: 47px; }
.c-name { width: 259px; }
.c-prot { width: 237px; }
.c-gene { width: 196px; }
.c-org { width: 221px; }
.c-len { width: 135px; }
.c-path { width: 117px; }
.c-int { width: 247px; }
.c-pub { width: 144px; }
.c-sub { width: 496px; }
.grid th {
    height: 48px;
    padding: 0 0 0 15px;
    background-color: #286396;
    color: #fff;
    font-weight: 500;
    text-align: left;
    white-space: nowrap;
}
.sort {
    display: inline-block;
    width: 0;
    height: 0;
    margin-left: 12px;
    border-left: 6px solid transparent;
    border-right: 6px solid transparent;
    border-bottom: 10px solid #aac2d6;
}
.grid td {
    padding: 12px 15px 13px;
    vertical-align: top;
    line-height: 36px;
}
.grid td.tall {
    line-height: 38.4px;
    padding-right: 10px;
}
.grid td.sub {
    padding-bottom: 37px;
    padding-right: 14px;
}
.grid tbody tr:nth-child(even) td {
    background-color: #e4e7ea;
}
.grid th.cell-check,
.grid td.cell-check {
    padding: 0;
    text-align: right;
}
.check {
    -webkit-appearance: none;
    appearance: none;
    width: 17px;
    height: 18px;
    margin: 0 9px 0 0;
    border: 2px solid #8a8a8a;
    border-radius: 4px;
    background-color: #fff;
    vertical-align: middle;
}
td.cell-check .check {
    margin-top: 21px;
    vertical-align: top;
}
.acc,
.grid td.tall a,
.org {
    color: #174a7c;
}
.acc,
.grid td.tall a {
    font-weight: 500;
}
.acc {
    font-weight: 600;
}
.org {
    font-weight: 600;
}
.grid td.tall a.more {
    font-size: 21.6px;
    font-weight: 600;
    color: #2a6496;
}
.dots {
    color: #2d6da3;
    font-size: 21px;
}
.grid b {
    font-weight: 700;
}

/* things on top of the page */
.scrollbar {
    position: absolute;
    top: 0;
    right: 0;
    bottom: 0;
    width: 16px;
    border-left: 2px solid #e8e8e8;
    background-color: #fafafa;
}
.scroll-thumb {
    display: block;
    width: 9px;
    height: 166px;
    margin: 6px 0 0 6px;
    background-color: #c2c2c2;
    border-radius: 5px 0 0 5px;
}
.side-btn {
    position: absolute;
    right: 16px;
    display: flex;
    flex-direction: column;
    align-items: center;
    color: #fff;
    font-family: "Liberation Sans", Arial, sans-serif;
    font-size: 21px;
    line-height: 24px;
    border-radius: 4px 0 0 4px;
}
.side-btn span {
    writing-mode: vertical-rl;
    transform: rotate(180deg);
}
.side-feedback {
    top: 514px;
    width: 60px;
    height: 164px;
    padding-top: 18px;
    gap: 18px;
    background-color: #3a6fa0;
}
.side-help {
    top: 940px;
    width: 66px;
    height: 77px;
    justify-content: center;
    background-color: #55a65b;
}
```
